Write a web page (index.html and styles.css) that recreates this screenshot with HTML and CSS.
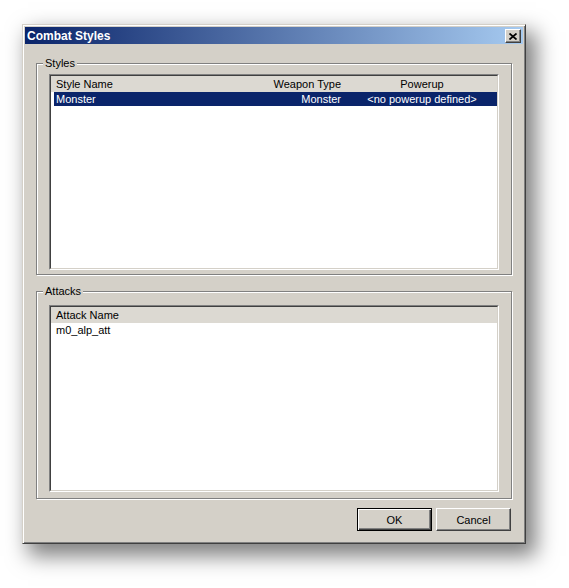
FILE: index.html
```html
<!DOCTYPE html>
<html lang="en">
<head>
    <meta charset="UTF-8">
    <title>Combat Styles</title>
    <link rel="stylesheet" href="styles.css">
</head>
<body>
    <div class="dialog">
        <!-- Caption bar -->
        <div class="titlebar">
            <span class="title">Combat Styles</span>
            <button class="close-btn" aria-label="Close">
                <svg width="8" height="7" viewBox="0 0 8 7">
                    <path d="M0.5 0.5 L7.5 6.5 M7.5 0.5 L0.5 6.5" stroke="#000" stroke-width="1.7" fill="none"/>
                </svg>
            </button>
        </div>

        <div class="client">
            <!-- Styles list -->
            <div class="group styles-group">
                <span class="group-label">Styles</span>
                <div class="listview styles-list">
                    <div class="listview-inner">
                        <div class="lv-header cols3">
                            <span class="c-name">Style Name</span>
                            <span class="c-weapon">Weapon Type</span>
                            <span class="c-power">Powerup</span>
                        </div>
                        <div class="lv-item cols3 selected">
                            <span class="c-name">Monster</span>
                            <span class="c-weapon">Monster</span>
                            <span class="c-power">&lt;no powerup defined&gt;</span>
                        </div>
                    </div>
                </div>
            </div>

            <!-- Attacks list -->
            <div class="group attacks-group">
                <span class="group-label">Attacks</span>
                <div class="listview attacks-list">
                    <div class="listview-inner">
                        <div class="lv-header">
                            <span class="c-name">Attack Name</span>
                        </div>
                        <div class="lv-item">
                            <span class="c-name">m0_alp_att</span>
                        </div>
                    </div>
                </div>
            </div>

            <div class="buttons">
                <button class="btn default">OK</button>
                <button class="btn">Cancel</button>
            </div>
        </div>
    </div>
</body>
</html>
```

FILE: styles.css
```css
html, body {
    height: 100%;
}

body {
    margin: 0;
    padding-top: 24px;
    box-sizing: border-box;
    background-color: #fff;
    font-family: "Liberation Sans", Arial, sans-serif;
    font-size: 11px;
    color: #000;
}

.dialog {
    margin-left: 22px;
    width: 504px;
    height: 520px;
    box-sizing: border-box;
    background-color: #d4d0c8;
    border: 1px solid;
    border-color: #d4d0c8 #404040 #404040 #d4d0c8;
    padding: 1px;
    box-shadow: inset 1px 1px 0 #fff, inset -1px -1px 0 #808080, 8px 10px 20px 2px rgba(0, 0, 0, 0.5);
    display: flex;
    flex-direction: column;
}

.titlebar {
    margin: 1px 1px 0 1px;
    height: 17px;
    display: flex;
    align-items: center;
    justify-content: space-between;
    background: linear-gradient(to right, #0a246a, #a6caf0);
    padding: 0 2px 0 2px;
}

.title {
    color: #fff;
    font-weight: bold;
    font-size: 12px;
}

.close-btn {
    width: 16px;
    height: 14px;
    padding: 0;
    margin-top: 1px;
    background-color: #d4d0c8;
    border: 1px solid;
    border-color: #fff #404040 #404040 #fff;
    box-shadow: inset -1px -1px 0 #808080;
    display: flex;
    align-items: center;
    justify-content: center;
}

.client {
    padding: 19px 0 0 12px;
}

/* Etched group box */
.group {
    position: relative;
    width: 476px;
    box-sizing: border-box;
    border: 1px solid #808080;
    box-shadow: inset 1px 1px 0 #fff, 1px 1px 0 #fff;
    padding-left: 12px;
}

.group-label {
    position: absolute;
    top: -7px;
    left: 6px;
    padding: 0 2px;
    background-color: #d4d0c8;
    line-height: 13px;
}

.styles-group {
    height: 212px;
    padding-top: 10px;
}

.attacks-group {
    margin-top: 16px;
    height: 208px;
    padding-top: 13px;
}

/* Sunken list view */
.listview {
    width: 450px;
    box-sizing: border-box;
    border: 1px solid;
    border-color: #808080 #fff #fff #808080;
}

.styles-list {
    height: 196px;
}

.attacks-list {
    height: 187px;
}

.listview-inner {
    height: 100%;
    box-sizing: border-box;
    border: 1px solid;
    border-color: #404040 #d4d0c8 #d4d0c8 #404040;
    background-color: #fff;
}

.lv-header {
    height: 16px;
    line-height: 16px;
    background-color: #dcd9d2;
    padding-left: 5px;
}

.lv-item {
    height: 14px;
    line-height: 14px;
    margin-left: 3px;
    padding-left: 2px;
}

.cols3 {
    display: grid;
    grid-template-columns: 193px 98px 150px;
}

.c-weapon {
    text-align: right;
    padding-right: 6px;
}

.c-power {
    text-align: center;
}

.selected {
    background-color: #0a246a;
    color: #fff;
}

.buttons {
    width: 475px;
    margin-top: 9px;
    display: flex;
    justify-content: flex-end;
    gap: 4px;
}

.btn {
    width: 75px;
    height: 23px;
    padding: 0;
    font-family: "Liberation Sans", Arial, sans-serif;
    font-size: 11px;
    color: #000;
    background-color: #d4d0c8;
    border: 1px solid;
    border-color: #fff #404040 #404040 #fff;
    box-shadow: inset -1px -1px 0 #808080;
}

.btn.default {
    border: 1px solid #000;
    box-shadow: inset 1px 1px 0 #fff, inset -1px -1px 0 #404040, inset -2px -2px 0 #808080;
}
```
